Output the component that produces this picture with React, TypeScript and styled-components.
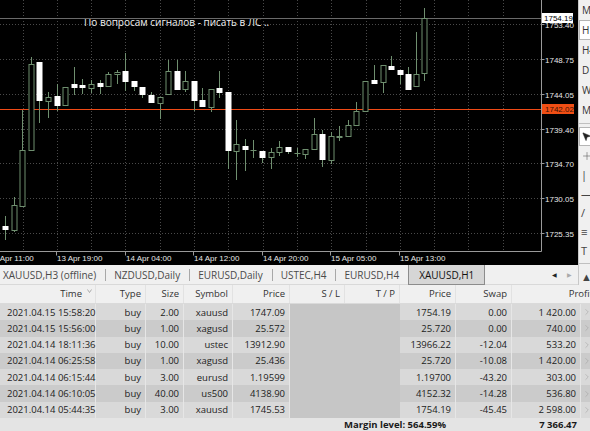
import styled, { createGlobalStyle } from 'styled-components';
import { ChevronRight, MousePointer2, Plus } from 'lucide-react';

const GlobalStyle = createGlobalStyle`
  html, body {
    margin: 0;
    padding: 0;
    background: #f0f0f0;
    overflow: hidden;
  }
`;

const Screen = styled.div`
  width: 590px;
  height: 431px;
  overflow: hidden;
  display: flex;
  flex-direction: column;
  background: #f0f0f0;
  font-family: "Open Sans", "Noto Sans", sans-serif;
  color: #222;
`;

const Top = styled.div`
  display: flex;
  height: 285px;
  flex-shrink: 0;
`;

const ChartColumn = styled.div`
  flex: 1;
  min-width: 0;
  display: flex;
  flex-direction: column;
`;

const ChartBox = styled.div`
  height: 265px;
  background: #000;
  overflow: hidden;
  svg { display: block; }
`;

const TabsBar = styled.div`
  height: 19px;
  display: flex;
  align-items: stretch;
  border-bottom: 1px solid #d9d9d9;
  background: #f0f0f0;
  position: relative;
`;

const Tab = styled.div<{ $active?: boolean }>`
  display: flex;
  align-items: center;
  padding: 0 ${p => (p.$active ? '10px' : '8px')};
  font-size: 10px;
  white-space: nowrap;
  position: relative;
  background: ${p => (p.$active ? '#d6d6d6' : 'transparent')};
  border: 1px solid ${p => (p.$active ? '#8c8c8c' : 'transparent')};
  border-top: none;
  margin-bottom: -1px;
  color: ${p => (p.$active ? '#111' : '#4a4a4a')};

  & + &::before {
    content: '';
    position: absolute;
    left: -1px;
    top: 4px;
    height: 12px;
    border-left: 1px solid #a8a8a8;
  }
`;

const TabFirst = styled(Tab)`
  padding-left: 2px;
`;

const ScrollArrows = styled.div`
  margin-left: auto;
  display: flex;
  align-items: center;
  gap: 10px;
  padding-right: 6px;
  font-size: 6px;
  color: #222;

  span:last-child { color: #aaa; }
`;

const SidePanel = styled.div`
  width: 11px;
  display: flex;
  flex-direction: column;
  background: #f0f0f0;
  border-left: 1px solid #c8c8c8;
  overflow: hidden;
`;

const PeriodButton = styled.div<{ $active?: boolean }>`
  height: 20px;
  width: 30px;
  flex-shrink: 0;
  display: flex;
  align-items: center;
  padding-left: 2px;
  box-sizing: border-box;
  font-size: 10px;
  color: #333;
  background: ${p => (p.$active ? '#fff' : 'transparent')};
  border: 1px solid ${p => (p.$active ? '#b5b5b5' : 'transparent')};
`;

const PanelSeparator = styled.div`
  height: 1px;
  background: #c0c0c0;
  margin: 3px 0 3px;
  flex-shrink: 0;
`;

const ToolButton = styled.div<{ $active?: boolean }>`
  height: 19px;
  width: 30px;
  flex-shrink: 0;
  display: flex;
  align-items: center;
  padding-left: 1px;
  box-sizing: border-box;
  color: #444;
  font-size: 11px;
  background: ${p => (p.$active ? '#fff' : 'transparent')};
  border: 1px solid ${p => (p.$active ? '#b5b5b5' : 'transparent')};
`;

const TableWrap = styled.div`
  flex: 1;
  display: flex;
  flex-direction: column;
  overflow: hidden;
`;

const COLS = '96px 50px 38px 49px 57px 55px 55px 56px 56px 69px 19px';

const HeaderRow = styled.div`
  display: grid;
  grid-template-columns: ${COLS};
  height: 18px;
  background: #f0f0f0;
  border-bottom: 1px solid #dadada;
  font-size: 9.5px;
  color: #333;
`;

const HeaderCell = styled.div<{ $span?: number; $pad?: number }>`
  display: flex;
  align-items: center;
  justify-content: flex-end;
  grid-column: ${p => (p.$span ? `span ${p.$span}` : 'auto')};
  padding-right: ${p => p.$pad ?? 4}px;
  border-right: 1px solid #e2e2e2;
  white-space: nowrap;
  gap: 5px;
`;

const SortMark = styled.svg`
  width: 5px;
  height: 4px;
  margin-top: -6px;
  margin-right: -1px;
`;

const Row = styled.div<{ $dark: boolean }>`
  display: grid;
  grid-template-columns: ${COLS};
  height: 16.3px;
  font-size: 9.5px;
  color: #1c1c1c;
  background: ${p => (p.$dark ? '#cbcbcb' : '#d9d9d9')};
`;

const Cell = styled.div<{ $left?: boolean; $blank?: boolean }>`
  display: flex;
  align-items: center;
  justify-content: ${p => (p.$left ? 'flex-start' : 'flex-end')};
  padding: ${p => (p.$left ? '0 0 0 7px' : '0 4px 0 0')};
  border-right: 1px solid ${p => (p.$blank ? 'transparent' : '#e6e6e6')};
  background: ${p => (p.$blank ? '#c6c6c6' : 'transparent')};
  white-space: nowrap;
`;

const Chevron = styled.div`
  display: flex;
  align-items: center;
  padding-left: 1px;
  color: #9a9a9a;
`;

const Footer = styled.div`
  flex: 1;
  display: flex;
  align-items: center;
  background: #e4e4e4;
  font-size: 9.5px;
  font-weight: 700;
  color: #1a1a1a;
`;

const MarginLevel = styled.div`
  padding-left: 344px;
  white-space: nowrap;
`;

const TotalProfit = styled.div`
  margin-left: auto;
  width: 120px;
  text-align: right;
  padding-right: 13px;
`;

type Candle = [number, number, number, number, number, boolean];

// x, high, body top, body bottom, low, bull (pixel rows on the plot)
const candles: Candle[] = [
  [5, 216, 226, 229, 239, false],
  [14, 197, 205, 230, 231, true],
  [22, 110, 150, 206, 206, true],
  [31, 57, 64, 150, 150, true],
  [39, 62, 62, 100, 122, false],
  [48, 92, 97, 101, 117, true],
  [57, 84, 96, 105, 110, false],
  [65, 87, 87, 105, 105, true],
  [74, 67, 84, 87, 94, false],
  [82, 79, 85, 87, 93, false],
  [91, 80, 84, 88, 92, true],
  [100, 80, 83, 86, 93, false],
  [108, 72, 74, 86, 86, true],
  [117, 70, 72, 74, 83, true],
  [125, 53, 71, 81, 90, false],
  [134, 81, 81, 86, 90, false],
  [142, 87, 87, 94, 97, false],
  [151, 92, 95, 102, 102, false],
  [160, 97, 97, 103, 118, true],
  [168, 60, 71, 94, 94, true],
  [177, 60, 71, 89, 89, false],
  [185, 71, 81, 89, 91, true],
  [194, 81, 81, 100, 110, false],
  [202, 88, 100, 106, 106, false],
  [211, 89, 89, 107, 111, true],
  [219, 71, 88, 92, 97, false],
  [228, 92, 92, 150, 168, false],
  [236, 120, 144, 151, 179, true],
  [245, 139, 146, 149, 170, false],
  [253, 140, 150, 150, 157, true],
  [262, 151, 151, 157, 162, false],
  [271, 148, 152, 157, 168, true],
  [279, 141, 147, 152, 155, true],
  [288, 147, 147, 151, 153, false],
  [297, 148, 153, 153, 156, true],
  [305, 149, 149, 154, 158, true],
  [314, 118, 134, 149, 149, true],
  [322, 130, 134, 159, 166, false],
  [331, 132, 136, 160, 163, true],
  [339, 126, 136, 137, 140, true],
  [348, 120, 125, 136, 136, true],
  [356, 102, 111, 125, 125, true],
  [365, 81, 81, 111, 111, true],
  [374, 65, 80, 83, 83, false],
  [383, 65, 65, 82, 92, true],
  [391, 56, 66, 69, 69, false],
  [400, 70, 70, 74, 83, false],
  [408, 67, 74, 89, 89, false],
  [416, 32, 74, 86, 86, true],
  [424, 8, 18, 73, 80, true],
];

const PLOT_RIGHT = 541.5;
const PLOT_BOTTOM = 251.5;
const WICK = '#6f8f6f';

const priceLevels = [
  { y: 24, label: '1753.40' },
  { y: 59, label: '1748.75' },
  { y: 94, label: '1744.05' },
  { y: 129, label: '1739.40' },
  { y: 163, label: '1734.70' },
  { y: 198, label: '1730.05' },
  { y: 233, label: '1725.35' },
];

const gridX = Array.from({ length: 15 }, (_, i) => Math.round(22.5 + 34.3 * i) + 0.5);
const timeTicks = [
  { x: -12, label: '13 Apr 11:00' },
  { x: 56, label: '13 Apr 19:00' },
  { x: 125, label: '14 Apr 04:00' },
  { x: 193, label: '14 Apr 12:00' },
  { x: 262, label: '14 Apr 20:00' },
  { x: 330, label: '15 Apr 05:00' },
  { x: 399, label: '15 Apr 13:00' },
];

const axisFont = { fontFamily: '"Liberation Sans", Arial, sans-serif', fontSize: 8 };

function Chart() {
  return (
    <svg width={579} height={265}>
      {gridX.map(x => (
        <line key={x} x1={x} x2={x} y1={0} y2={PLOT_BOTTOM} stroke="#4a4a4a" strokeDasharray="1 2" />
      ))}
      {priceLevels.map(l => (
        <line key={l.y} x1={0} x2={PLOT_RIGHT} y1={l.y + 0.5} y2={l.y + 0.5} stroke="#4a4a4a" strokeDasharray="1 2" />
      ))}

      <text x={84} y={26} fill="#f2f2f2" fontFamily='"Open Sans", sans-serif' fontSize={10}>
        По вопросам сигналов - писать в ЛС ..
      </text>

      <line x1={0} x2={PLOT_RIGHT} y1={18.5} y2={18.5} stroke="#6a6a6a" />
      <line x1={0} x2={PLOT_RIGHT} y1={109.5} y2={109.5} stroke="#f04a16" />

      {candles.map(([x, hi, top, bot, lo, bull]) => {
        const cx = x + 0.5;
        return (
          <g key={x}>
            <line x1={cx} x2={cx} y1={hi} y2={lo + 1} stroke={WICK} />
            {bot - top < 1 ? (
              <line x1={cx - 3} x2={cx + 3} y1={top + 0.5} y2={top + 0.5} stroke={WICK} />
            ) : (
              <rect
                x={cx - 2.5}
                y={top + 0.5}
                width={5}
                height={bot - top}
                fill={bull ? '#000' : '#fff'}
                stroke={bull ? WICK : '#fff'}
              />
            )}
          </g>
        );
      })}

      <line x1={PLOT_RIGHT} x2={PLOT_RIGHT} y1={0} y2={PLOT_BOTTOM} stroke="#9a9a9a" />
      <line x1={0} x2={PLOT_RIGHT} y1={PLOT_BOTTOM} y2={PLOT_BOTTOM} stroke="#9a9a9a" />

      {priceLevels.map(l => (
        <g key={l.label}>
          <line x1={PLOT_RIGHT} x2={PLOT_RIGHT + 3} y1={l.y + 0.5} y2={l.y + 0.5} stroke="#9a9a9a" />
          <text x={545} y={l.y + 3.5} fill="#e6e6e6" {...axisFont}>{l.label}</text>
        </g>
      ))}

      <rect x={542} y={13} width={31} height={10} fill="#fff" />
      <text x={544} y={21} fill="#000" {...axisFont}>1754.19</text>

      <rect x={542} y={104} width={32} height={10} fill="#f04e14" />
      <text x={545} y={112} fill="#3a1204" {...axisFont}>1742.02</text>

      {timeTicks.map(t => (
        <g key={t.label}>
          <line x1={t.x + 0.5} x2={t.x + 0.5} y1={PLOT_BOTTOM} y2={PLOT_BOTTOM + 4} stroke="#9a9a9a" />
          <text x={t.x + 1} y={261} fill="#e6e6e6" {...axisFont}>{t.label}</text>
        </g>
      ))}
    </svg>
  );
}

const tabs = ['NZDUSD,Daily', 'EURUSD,Daily', 'USTEC,H4', 'EURUSD,H4'];

const periods = ['M30', 'H1', 'H4', 'D1', 'W1', 'MN'];

const trades = [
  ['2021.04.15 15:58:20', 'buy', '2.00', 'xauusd', '1747.09', '1754.19', '0.00', '1 420.00'],
  ['2021.04.15 15:56:00', 'buy', '1.00', 'xagusd', '25.572', '25.720', '0.00', '740.00'],
  ['2021.04.14 18:11:36', 'buy', '10.00', 'ustec', '13912.90', '13966.22', '-12.04', '533.20'],
  ['2021.04.14 06:25:58', 'buy', '1.00', 'xagusd', '25.436', '25.720', '-10.08', '1 420.00'],
  ['2021.04.14 06:15:44', 'buy', '3.00', 'eurusd', '1.19599', '1.19700', '-43.20', '303.00'],
  ['2021.04.14 06:10:05', 'buy', '40.00', 'us500', '4138.90', '4152.32', '-14.28', '536.80'],
  ['2021.04.14 05:44:35', 'buy', '3.00', 'xauusd', '1745.53', '1754.19', '-45.45', '2 598.00'],
];

export default function App() {
  return (
    <Screen>
      <GlobalStyle />
      <Top>
        <ChartColumn>
          <ChartBox>
            <Chart />
          </ChartBox>
          <TabsBar>
            <TabFirst>XAUUSD,H3 (offline)</TabFirst>
            {tabs.map(t => (
              <Tab key={t}>{t}</Tab>
            ))}
            <Tab $active>XAUUSD,H1</Tab>
            <ScrollArrows>
              <span>◀</span>
              <span>▶</span>
            </ScrollArrows>
          </TabsBar>
        </ChartColumn>
        <SidePanel>
          {periods.map(p => (
            <PeriodButton key={p} $active={p === 'H1'}>{p}</PeriodButton>
          ))}
          <PanelSeparator />
          <ToolButton $active>
            <MousePointer2 size={11} fill="#222" strokeWidth={1} />
          </ToolButton>
          <ToolButton>
            <Plus size={12} strokeWidth={1} />
          </ToolButton>
          <ToolButton>|</ToolButton>
          <ToolButton>—</ToolButton>
          <ToolButton>/</ToolButton>
          <ToolButton>≡</ToolButton>
          <ToolButton>T</ToolButton>
          <PanelSeparator />
          <ToolButton>▲</ToolButton>
        </SidePanel>
      </Top>

      <TableWrap>
        <HeaderRow>
          <HeaderCell>
            Time
            <SortMark viewBox="0 0 5 4">
              <path d="M0.5 0.5 L2.5 3.5 L4.5 0.5" fill="none" stroke="#9a9a9a" strokeWidth={0.8} />
            </SortMark>
          </HeaderCell>
          <HeaderCell>Type</HeaderCell>
          <HeaderCell>Size</HeaderCell>
          <HeaderCell>Symbol</HeaderCell>
          <HeaderCell>Price</HeaderCell>
          <HeaderCell>S / L</HeaderCell>
          <HeaderCell>T / P</HeaderCell>
          <HeaderCell>Price</HeaderCell>
          <HeaderCell>Swap</HeaderCell>
          <HeaderCell $span={2} $pad={6}>Profit</HeaderCell>
        </HeaderRow>

        {trades.map((t, i) => (
          <Row key={t[0]} $dark={i % 2 === 1}>
            <Cell $left>{t[0]}</Cell>
            <Cell>{t[1]}</Cell>
            <Cell>{t[2]}</Cell>
            <Cell>{t[3]}</Cell>
            <Cell>{t[4]}</Cell>
            <Cell $blank />
            <Cell $blank />
            <Cell>{t[5]}</Cell>
            <Cell>{t[6]}</Cell>
            <Cell>{t[7]}</Cell>
            <Chevron>
              <ChevronRight size={10} strokeWidth={1.2} />
            </Chevron>
          </Row>
        ))}

        <Footer>
          <MarginLevel>Margin level: 564.59%</MarginLevel>
          <TotalProfit>7 366.47</TotalProfit>
        </Footer>
      </TableWrap>
    </Screen>
  );
}
